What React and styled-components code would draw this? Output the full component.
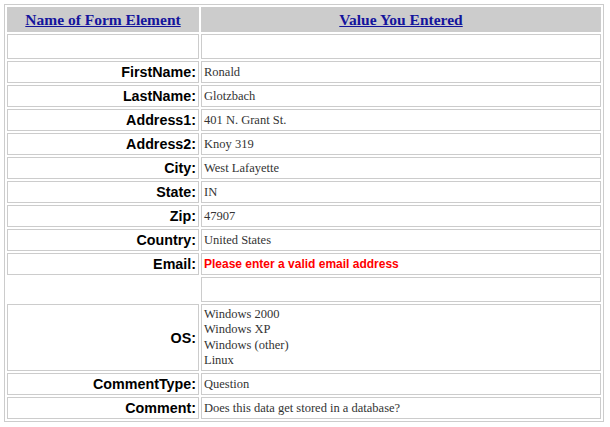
import React from 'react';
import styled, { createGlobalStyle } from 'styled-components';

const rows = [
  { label: 'FirstName:', value: 'Ronald' },
  { label: 'LastName:', value: 'Glotzbach' },
  { label: 'Address1:', value: '401 N. Grant St.' },
  { label: 'Address2:', value: 'Knoy 319' },
  { label: 'City:', value: 'West Lafayette' },
  { label: 'State:', value: 'IN' },
  { label: 'Zip:', value: '47907' },
  { label: 'Country:', value: 'United States' },
  { label: 'Email:', value: 'Please enter a valid email address', error: true },
  { blank: true },
  { label: 'OS:', lines: ['Windows 2000', 'Windows XP', 'Windows (other)', 'Linux'] },
  { label: 'CommentType:', value: 'Question' },
  { label: 'Comment:', value: 'Does this data get stored in a database?' },
];

const App = () => {
  return (
    <>
      <GlobalStyle />
      <ResultTable>
        <tbody>
          <tr>
            <HeadCell width={192}><HeadLink href="#">Name of Form Element</HeadLink></HeadCell>
            <HeadCell><HeadLink href="#">Value You Entered</HeadLink></HeadCell>
          </tr>
          <tr>
            <Cell $spacer />
            <Cell $spacer />
          </tr>
          {rows.map((row, i) =>
            row.blank ? (
              <tr key={i}>
                <Cell $spacer $bare />
                <Cell $spacer />
              </tr>
            ) : (
              <tr key={i}>
                <Label>{row.label}</Label>
                <Value $error={row.error}>
                  {row.lines ? row.lines.map((l) => <Line key={l}>{l}</Line>) : row.value}
                </Value>
              </tr>
            )
          )}
        </tbody>
      </ResultTable>
    </>
  );
};

export default App;

const GlobalStyle = createGlobalStyle`
  body {
    margin: 4px;
    background: #fff;
    font-family: "Liberation Serif", "Times New Roman", serif;
  }
`;

const ResultTable = styled.table`
  width: 600px;
  border: 1px solid #cccccc;
  border-collapse: separate;
  border-spacing: 2px;
`;

const HeadCell = styled.th`
  height: 25px;
  box-sizing: border-box;
  padding: 2px;
  background: #cccccc;
  border: 1px solid #cccccc;
  text-align: center;
  vertical-align: middle;
`;

const HeadLink = styled.a`
  font-family: "Liberation Serif", "Times New Roman", serif;
  font-size: 15.5px;
  font-weight: bold;
  line-height: 19px;
  color: #14149c;
  text-decoration: underline;
`;

const Cell = styled.td`
  box-sizing: border-box;
  height: ${(p) => (p.$spacer ? '25px' : 'auto')};
  padding: 2px;
  border: 1px solid ${(p) => (p.$bare ? 'transparent' : '#cccccc')};
`;

const Label = styled.td`
  width: 192px;
  box-sizing: border-box;
  padding: 2px;
  border: 1px solid #cccccc;
  text-align: right;
  vertical-align: middle;
  font-family: "Liberation Sans", Arial, sans-serif;
  font-size: 14.3px;
  font-weight: bold;
  line-height: 16px;
  color: #000;
`;

const Value = styled.td`
  box-sizing: border-box;
  padding: 2px;
  border: 1px solid #cccccc;
  text-align: left;
  vertical-align: middle;
  font-family: ${(p) => (p.$error ? '"Liberation Sans", Arial, sans-serif' : '"Liberation Serif", "Times New Roman", serif')};
  font-size: ${(p) => (p.$error ? '12px' : '12.5px')};
  font-weight: ${(p) => (p.$error ? 'bold' : 'normal')};
  line-height: 15px;
  color: ${(p) => (p.$error ? '#ff0000' : '#333333')};
`;

const Line = styled.div`
  line-height: 15.3px;
`;
